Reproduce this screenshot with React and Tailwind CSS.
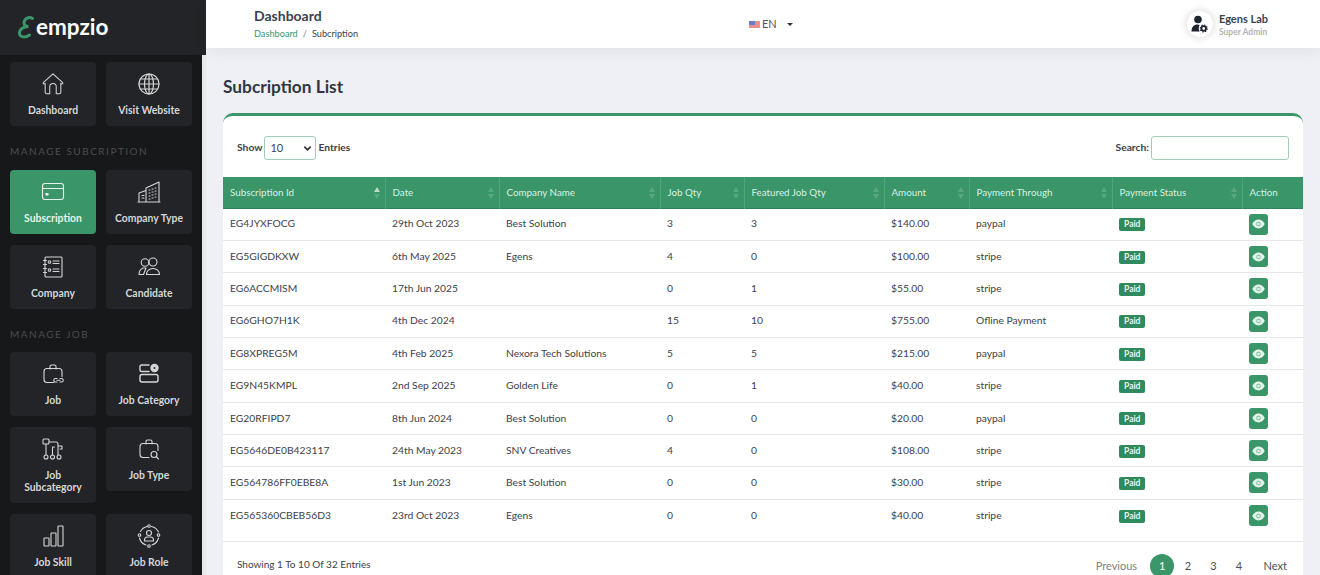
const ic = { width: 26, height: 26, viewBox: '0 0 26 26', fill: 'none', stroke: 'currentColor', strokeWidth: 1.1, strokeLinecap: 'round', strokeLinejoin: 'round' };

const HomeIcon = () => (
  <svg {...ic} width="24" height="24">
    <path d="M2.5 11.5 13 2l10.500 9.500c.6.800-.3 1.900-1.300 1.300l-.7-.5V22a1.500 1.500 0 0 1-1.500 1.500h-3.500V16a3.500 3.500 0 0 0-7 0v7.500H6A1.500 1.500 0 0 1 4.500 22v-9.700l-.7.500c-1 .6-1.900-.5-1.300-1.300Z" />
  </svg>
);
const GlobeIcon = () => (
  <svg {...ic} strokeWidth="1.200">
    <circle cx="13" cy="13" r="10" />
    <ellipse cx="13" cy="13" rx="4.500" ry="10" />
    <path d="M13 3v20M3 13h20M4.300 8h17.400M4.300 18h17.400" />
  </svg>
);
const CardIcon = () => (
  <svg {...ic}>
    <rect x="2.500" y="4.500" width="21" height="16" rx="2.500" />
    <path d="M2.500 9.500h21" />
    <rect x="5.500" y="14" width="3" height="2.500" fill="currentColor" stroke="none" />
  </svg>
);
const BuildingIcon = () => (
  <svg {...ic}>
    <path d="M3 23V14l7-2.500M10 23V9l13-6v20M2 23h22M6 16.500h2M6 19h2M13 11h1M16 10h1M19 9h1M13 14h1M16 13h1M19 12h1M13 17h1M16 16h1M19 15h1M13 20h1M16 19h1M19 18h1" />
  </svg>
);
const CompanyIcon = () => (
  <svg {...ic}>
    <rect x="5" y="3" width="17" height="20" rx="1" />
    <path d="M3.500 6.500h3M3.500 10.500h3M3.500 14.500h3M3.500 18.500h3M13 7h6M13 9.500h6M13 15h6M13 17.500h6" />
    <circle cx="9.500" cy="8" r="1.300" />
    <circle cx="9.500" cy="16" r="1.300" />
  </svg>
);
const CandidateIcon = () => (
  <svg {...ic}>
    <circle cx="9" cy="8.500" r="3.800" />
    <circle cx="17" cy="8" r="4" />
    <path d="M3 20.500c0-3 1.800-5.500 4-6.500h3l-2.500 6.500ZM10.500 20.500c0-3.500 2.800-6 6.500-6s6.500 2.500 6.500 6Z" />
  </svg>
);
const JobIcon = () => (
  <svg {...ic}>
    <path d="M10 8V5.500A1.500 1.500 0 0 1 11.500 4h3A1.500 1.500 0 0 1 16 5.500V8" />
    <path d="M14 21.500H7A3 3 0 0 1 4 18.500V10.500A3 3 0 0 1 7 7.500h12a3 3 0 0 1 3 3v5" />
    <path d="M17 17.500h-1.500a1.700 1.700 0 0 0 0 3.500H17M20 17.500h1.500a1.700 1.700 0 0 1 0 3.500H20M17 19.200h3" />
  </svg>
);
const CategoryIcon = () => (
  <svg {...ic} strokeWidth="1.400">
    <path d="M13 4H5.500A1.500 1.500 0 0 0 4 5.500V9a1.500 1.500 0 0 0 1.500 1.500H13" />
    <rect x="4" y="13.500" width="18" height="7.500" rx="2" />
    <circle cx="18.500" cy="7" r="3.500" fill="currentColor" />
    <circle cx="18.500" cy="7" r="1" fill="#222427" stroke="none" />
  </svg>
);
const SubcatIcon = () => (
  <svg {...ic}>
    <rect x="3" y="3" width="6" height="5" rx="1" />
    <path d="M6 8v11M13 6h-4M13 6h3a2 2 0 0 1 2 2v11M12.500 11v8M12.500 11h2M18 10h4v3h-2" />
    <circle cx="6" cy="21" r="2" />
    <circle cx="12.500" cy="21" r="2" />
    <circle cx="19" cy="21" r="2" />
  </svg>
);
const TypeIcon = () => (
  <svg {...ic}>
    <path d="M10 8V5.500A1.500 1.500 0 0 1 11.500 4h3A1.500 1.500 0 0 1 16 5.500V8" />
    <path d="M13 21.500H7A3 3 0 0 1 4 18.500V10.500A3 3 0 0 1 7 7.500h12a3 3 0 0 1 3 3v4" />
    <circle cx="18" cy="18.500" r="3" />
    <path d="m20.500 21 2 2" />
  </svg>
);
const SkillIcon = () => (
  <svg {...ic}>
    <rect x="4" y="15" width="5" height="8" rx=".5" />
    <rect x="11" y="10" width="5" height="13" rx=".5" />
    <rect x="18" y="3" width="5" height="20" rx=".5" />
  </svg>
);
const RoleIcon = () => (
  <svg {...ic}>
    <path d="M11 3.500a10 10 0 0 0-6.500 5M3.500 15a10 10 0 0 0 6.500 7M16 22a10 10 0 0 0 6.500-7M22.500 9a10 10 0 0 0-7-5.500" />
    <circle cx="13" cy="3" r="1.300" />
    <circle cx="3.500" cy="12" r="1.300" />
    <circle cx="22.500" cy="12" r="1.300" />
    <circle cx="13" cy="23" r="1.300" />
    <circle cx="13" cy="10" r="2.500" />
    <path d="M8.500 18v-1c0-1.800 1.500-3 3-3h3c1.500 0 3 1.200 3 3v1Z" />
  </svg>
);

const Tile = ({ icon, label, active, h = 'h-16' }) => (
  <div className={`${h} w-[86px] rounded flex flex-col items-center pt-[9px] ${active ? 'bg-[#3a9669] text-[#e6f2ec]' : 'bg-[#222427] text-[#d5d6d8]'}`}>
    <div className="h-[26px] flex items-center justify-center">{icon}</div>
    <div className="mt-[7px] text-[10.400px] leading-3 font-bold text-center">{label}</div>
  </div>
);

const SectionLabel = ({ children }) => (
  <div className="text-[10px] leading-3 tracking-[1.500px] text-[#4b4d50]">{children}</div>
);

const columns = [
  ['Subscription Id', 'w-[162px]'],
  ['Date', 'w-[114px]'],
  ['Company Name', 'w-[161px]'],
  ['Job Qty', 'w-[84px]'],
  ['Featured Job Qty', 'w-[140px]'],
  ['Amount', 'w-[85px]'],
  ['Payment Through', 'w-[143px]'],
  ['Payment Status', 'w-[130px]'],
  ['Action', 'w-[61px]'],
];

const rows = [
  ['EG4JYXFOCG', '29th Oct 2023', 'Best Solution', '3', '3', '$140.00', 'paypal'],
  ['EG5GIGDKXW', '6th May 2025', 'Egens', '4', '0', '$100.00', 'stripe'],
  ['EG6ACCMISM', '17th Jun 2025', '', '0', '1', '$55.00', 'stripe'],
  ['EG6GHO7H1K', '4th Dec 2024', '', '15', '10', '$755.00', 'Ofline Payment'],
  ['EG8XPREG5M', '4th Feb 2025', 'Nexora Tech Solutions', '5', '5', '$215.00', 'paypal'],
  ['EG9N45KMPL', '2nd Sep 2025', 'Golden Life', '0', '1', '$40.00', 'stripe'],
  ['EG20RFIPD7', '8th Jun 2024', 'Best Solution', '0', '0', '$20.00', 'paypal'],
  ['EG5646DE0B423117', '24th May 2023', 'SNV Creatives', '4', '0', '$108.00', 'stripe'],
  ['EG564786FF0EBE8A', '1st Jun 2023', 'Best Solution', '0', '0', '$30.00', 'stripe'],
  ['EG565360CBEB56D3', '23rd Oct 2023', 'Egens', '0', '0', '$40.00', 'stripe'],
];

const SortArrows = ({ active }) => (
  <span className="absolute right-[5px] top-[10px] flex flex-col gap-[2px]">
    <span className={`block w-0 h-0 border-x-[3.500px] border-x-transparent border-b-[5px] ${active ? 'border-b-[#b9dcca]' : 'border-b-[#57a981]'}`} />
    <span className="block w-0 h-0 border-x-[3.500px] border-x-transparent border-t-[5px] border-t-[#57a981]" />
  </span>
);

const EyeFill = () => (
  <svg width="13" height="10" viewBox="0 0 13 10">
    <path d="M.3 5C1.600 2.200 3.800.6 6.500.6s4.900 1.600 6.200 4.400c-1.300 2.800-3.500 4.400-6.200 4.400S1.600 7.800.3 5Z" fill="#e4f2ea" />
    <circle cx="6.500" cy="5" r="2.300" fill="#7fc0a0" />
    <circle cx="6.500" cy="5" r="1.300" fill="#e4f2ea" />
  </svg>
);

export default function App() {
  return (
    <div className="h-screen flex overflow-hidden bg-[#eff0f6] text-[#3d4148] font-['Lato','Liberation_Sans',sans-serif]">
      <aside className="w-[206px] shrink-0 flex flex-col bg-[#17181a]">
        <div className="h-[55px] shrink-0 bg-[#222427] flex items-center pl-[18px]">
          <svg width="16" height="23" viewBox="0 0 16 23" fill="none" stroke="#3a9669" strokeWidth="3" strokeLinecap="round" className="mr-[2px]">
            <path d="M14.500 2.500C11 .3 6.500 2.500 6 6.500c-.3 2.500 1.500 4 4.500 4C5 10.500 1.300 13.500 1.500 17.500c.2 4 6 4.500 10 1.500" />
          </svg>
          <span className="text-white text-[22.500px] font-bold leading-none">empzio</span>
        </div>
        <div className="flex-1 flex min-h-0">
          <nav className="w-[202px] pt-[7px] pl-[10px]">
            <div className="flex gap-[10px]">
              <Tile icon={<HomeIcon />} label="Dashboard" />
              <Tile icon={<GlobeIcon />} label="Visit Website" />
            </div>
            <div className="mt-[19px] mb-[13px]"><SectionLabel>MANAGE SUBCRIPTION</SectionLabel></div>
            <div className="grid grid-cols-[86px_86px] gap-x-[10px] gap-y-[11px] items-start">
              <Tile icon={<CardIcon />} label="Subscription" active />
              <Tile icon={<BuildingIcon />} label="Company Type" />
              <Tile icon={<CompanyIcon />} label="Company" />
              <Tile icon={<CandidateIcon />} label="Candidate" />
            </div>
            <div className="mt-[19px] mb-[12px]"><SectionLabel>MANAGE JOB</SectionLabel></div>
            <div className="grid grid-cols-[86px_86px] gap-x-[10px] gap-y-[11px] items-start">
              <Tile icon={<JobIcon />} label="Job" />
              <Tile icon={<CategoryIcon />} label="Job Category" />
              <Tile icon={<SubcatIcon />} label={<>Job<br />Subcategory</>} h="h-[76px]" />
              <Tile icon={<TypeIcon />} label="Job Type" />
              <Tile icon={<SkillIcon />} label="Job Skill" />
              <Tile icon={<RoleIcon />} label="Job Role" />
            </div>
          </nav>
          <div className="w-1 bg-[#e9e9ec]" />
        </div>
      </aside>

      <div className="flex-1 min-w-0 flex flex-col">
        <header className="h-12 shrink-0 bg-white shadow-[0_4px_14px_rgba(0,0,0,0.06)] flex items-center relative">
          <div className="ml-[48px] w-[240px]">
            <div className="text-[14px] leading-[17px] font-bold text-[#3b4250] mt-[-2px]">Dashboard</div>
            <div className="text-[9.200px] leading-3 mt-[4px]">
              <span className="text-[#3a9669]">Dashboard</span>
              <span className="mx-[5px] text-[#7b8088]">/</span>
              <span>Subcription</span>
            </div>
          </div>
          <div className="ml-[255px] flex items-center text-[11px] text-[#555]">
            <span className="w-[11px] h-[7px] overflow-hidden mr-[2px] bg-[#ef8f8f] relative">
              <span className="absolute left-0 top-0 w-[6px] h-[4px] bg-[#5f7fd0]" />
            </span>
            <span>EN</span>
            <span className="ml-[10px] w-0 h-0 border-x-[3px] border-x-transparent border-t-[3.500px] border-t-[#333]" />
          </div>
          <div className="ml-auto mr-[52px] flex items-center">
            <div className="w-[26px] h-[26px] rounded-full bg-white shadow-[0_0_8px_rgba(0,0,0,0.18)] flex items-center justify-center">
              <svg width="17" height="18" viewBox="0 0 17 18" fill="#1c2430">
                <circle cx="7" cy="4.500" r="3.800" />
                <path d="M.5 16.500c0-4.500 2.500-7 6-7 1 0 1.600.2 2.200.5-1.300 2-1.300 4.300 0 6.500Z" />
                <circle cx="12.700" cy="13.500" r="2.300" fill="none" stroke="#1c2430" strokeWidth="1.800" />
                <circle cx="12.700" cy="13.500" r="3.500" fill="none" stroke="#1c2430" strokeWidth="1.100" strokeDasharray="1.300 1.450" />
              </svg>
            </div>
            <div className="ml-[6px]">
              <div className="text-[11px] leading-[13px] font-bold text-[#3b4250]">Egens Lab</div>
              <div className="text-[8.500px] leading-[10px] mt-[2px] font-bold text-[#b0b3b8]">Super Admin</div>
            </div>
          </div>
        </header>

        <main className="flex-1 min-h-0 pl-[17px] pr-[17px]">
          <h1 className="text-[17.300px] leading-[22px] font-bold text-[#2f3744] mt-[28px]">Subcription List</h1>
          <section className="mt-[15px] bg-white rounded-t-[10px] border-t-[3px] border-[#3a9669]">
            <div className="h-[61px] flex items-start justify-between px-[14px] pt-[20px]">
              <div className="flex items-center text-[10.300px] font-bold">
                <span>Show</span>
                <div className="mx-[2px] w-[52px] h-[24px] rounded-[3px] border border-[#9fd0b7] flex items-center justify-between pl-[5px] pr-[2px] font-normal text-[11px]">
                  10
                  <svg width="11" height="11" viewBox="0 0 24 24" fill="none" stroke="#333" strokeWidth="3.500" strokeLinecap="round" strokeLinejoin="round"><path d="m6 9 6 6 6-6" /></svg>
                </div>
                <span>Entries</span>
              </div>
              <div className="flex items-center text-[10.300px] font-bold">
                <span className="mr-[2px]">Search:</span>
                <div className="w-[138px] h-[24px] rounded-[3px] border border-[#9fd0b7]" />
              </div>
            </div>
            <table className="w-full table-fixed border-collapse text-[10.300px]">
              <thead>
                <tr className="bg-[#3a9669] text-[#d9efe3] h-[31px] border-b border-[#2f8259] text-[9.800px]">
                  {columns.map(([name, w], i) => (
                    <th key={name} className={`${w} relative text-left font-normal px-[7px] border-r border-[#4ea67b] last:border-r-0`}>
                      {name}
                      {name !== 'Action' && <SortArrows active={i === 0} />}
                    </th>
                  ))}
                </tr>
              </thead>
              <tbody>
                {rows.map((row, i) => (
                  <tr key={row[0]} className={`h-[32.350px] ${i < 9 ? 'border-b border-[#e6e7e9]' : ''}`}>
                    {row.map((cell, j) => (
                      <td key={j} className="px-[7px] truncate">{cell}</td>
                    ))}
                    <td className="px-[7px]">
                      <span className="inline-flex items-center h-[13px] px-[5px] rounded-[2px] bg-[#2f8a5c] text-[#e8f4ee] text-[8.500px] font-bold">Paid</span>
                    </td>
                    <td className="px-[7px]">
                      <span className="w-[19px] h-[21px] rounded-[3px] bg-[#3a9669] flex items-center justify-center">
                        <EyeFill />
                      </span>
                    </td>
                  </tr>
                ))}
              </tbody>
            </table>
            <div className="mt-[10px] border-t border-[#e6e7e9] h-[60px] flex items-start justify-between pl-[14px] pr-[16px] pt-[12px] text-[10px]">
              <span className="mt-[3px]">Showing 1 To 10 Of 32 Entries</span>
              <div className="flex items-center text-[#4b4f57] text-[11px]">
                <span className="text-[#7e8188] mr-[13px]">Previous</span>
                <span className="w-6 h-6 rounded-full bg-[#3a9669] text-white flex items-center justify-center">1</span>
                <span className="w-[25.500px] text-center ml-[1px]">2</span>
                <span className="w-[25.500px] text-center">3</span>
                <span className="w-[25.500px] text-center">4</span>
                <span className="ml-[12px]">Next</span>
              </div>
            </div>
          </section>
        </main>
      </div>
    </div>
  );
}
